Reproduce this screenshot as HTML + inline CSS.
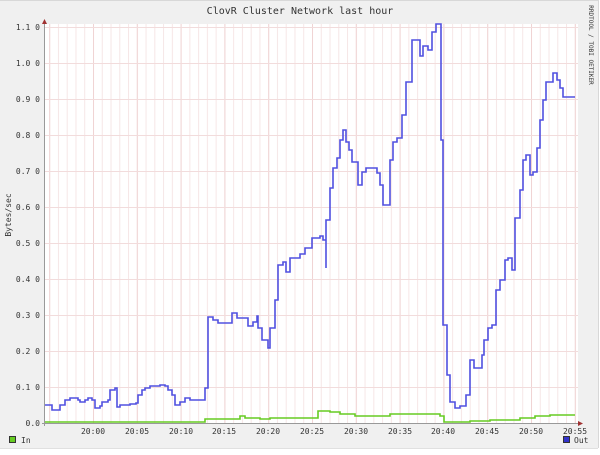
<!DOCTYPE html>
<html><head><meta charset="utf-8"><style>
html,body{margin:0;padding:0;background:#fff;width:600px;height:455px;overflow:hidden}
svg{display:block}
text{font-family:"DejaVu Sans Mono","Liberation Mono",monospace;fill:#333}
</style></head><body>
<svg width="600" height="455" viewBox="0 0 600 455" xmlns="http://www.w3.org/2000/svg">
<defs>
<pattern id="minor" x="49.2" y="0" width="8.76" height="455" patternUnits="userSpaceOnUse">
<line x1="0.5" y1="0" x2="0.5" y2="455" stroke="#f6e6e6" stroke-width="1"/>
</pattern>
<pattern id="major" x="49.2" y="0" width="43.8" height="455" patternUnits="userSpaceOnUse">
<line x1="0.5" y1="0" x2="0.5" y2="455" stroke="#f0d4d4" stroke-width="1"/>
</pattern>
</defs>
<rect x="0" y="0" width="598" height="448" fill="#f0f0f0"/>
<line x1="0" y1="448.5" x2="598" y2="448.5" stroke="#e0e0e0"/>
<line x1="598.5" y1="0" x2="598.5" y2="448" stroke="#d8d8d8"/>
<line x1="0" y1="0.5" x2="598" y2="0.5" stroke="#d8d8d8"/>
<rect x="45" y="24" width="533" height="399" fill="#fff"/>
<rect x="45" y="24" width="533" height="399" fill="url(#minor)"/>
<rect x="45" y="24" width="533" height="399" fill="url(#major)"/>
<g stroke="#f2dcdc">
<line x1="45" y1="27.5" x2="578" y2="27.5"/><line x1="45" y1="63.5" x2="578" y2="63.5"/>
<line x1="45" y1="99.5" x2="578" y2="99.5"/><line x1="45" y1="135.5" x2="578" y2="135.5"/>
<line x1="45" y1="171.5" x2="578" y2="171.5"/><line x1="45" y1="207.5" x2="578" y2="207.5"/>
<line x1="45" y1="243.5" x2="578" y2="243.5"/><line x1="45" y1="279.5" x2="578" y2="279.5"/>
<line x1="45" y1="315.5" x2="578" y2="315.5"/><line x1="45" y1="351.5" x2="578" y2="351.5"/>
<line x1="45" y1="387.5" x2="578" y2="387.5"/>
</g>
<path fill="none" stroke="#5050e0" stroke-width="1.6" d="M45,405 H52 V410 H60 V405 H65 V400 H70 V398 H78 V400 H80 V402 H85 V400 H88 V398 H92 V400 H95 V408 H100 V406 H102 V402 H108 V400 H110 V390 H115 V388 H117 V407 H120 V405 H130 V404 H136 V403 H138 V395 H142 V390 H145 V388 H150 V386 H160 V385 H165 V386 H168 V390 H172 V395 H175 V405 H180 V402 H185 V398 H190 V400 H205 V395 V388 H208 V317 H213 V320 H218 V323 H232 V313 H237 V318 H245 V318 H248 V326 H253 V322 H257 V316 H258 V328 H262 V340 H268 V348 H270 V328 H275 V300 H278 V265 H283 V262 H286 V272 H290 V258 H300 V254 H305 V248 H312 V238 H320 V236 H323 V240 H326 V268 V220 H330 V188 H333 V168 H337 V158 H340 V140 H343 V130 H346 V142 H349 V150 H352 V162 H358 V185 H362 V172 H366 V168 H377 V173 H380 V185 H383 V205 H390 V185 V160 H393 V142 H397 V138 H402 V115 H406 V82 H412 V40 H420 V56 H423 V46 H428 V50 H432 V32 H436 V24 H441 V140 H443 V325 H447 V375 H450 V402 H455 V408 H460 V406 H466 V395 H470 V360 H474 V368 H482 V355 H484 V340 H488 V328 H492 V325 H496 V290 H500 V280 H505 V260 H508 V258 H512 V270 H515 V218 H520 V190 H523 V160 H526 V155 H530 V175 H533 V172 H537 V148 H540 V120 H543 V100 H546 V82 H553 V73 H557 V80 H560 V88 H563 V97 H575"/>
<path fill="none" stroke="#66cc22" stroke-width="1.6" d="M45,422 H205 V419 H240 V416 H245 V418 H260 V419 H270 V418 H318 V411 H330 V412 H340 V414 H355 V416 H390 V414 H440 V416 H444 V422 H470 V421 H490 V420 H520 V418 H535 V416 H550 V415 H575"/>
<line x1="44.5" y1="22" x2="44.5" y2="426" stroke="#999"/>
<line x1="42" y1="423.5" x2="580" y2="423.5" stroke="#999"/>
<polygon points="42,24 47,24 44.5,19" fill="#a03030"/>
<polygon points="578,421 578,426 583,423.5" fill="#a03030"/>
<text x="300" y="14" font-size="10" text-anchor="middle" fill="#222">ClovR Cluster Network last hour</text>
<g font-size="8" text-anchor="end">
<text x="40" y="30">1.1 0</text><text x="40" y="66">1.0 0</text><text x="40" y="102">0.9 0</text>
<text x="40" y="138">0.8 0</text><text x="40" y="174">0.7 0</text><text x="40" y="210">0.6 0</text>
<text x="40" y="246">0.5 0</text><text x="40" y="282">0.4 0</text><text x="40" y="318">0.3 0</text>
<text x="40" y="354">0.2 0</text><text x="40" y="390">0.1 0</text><text x="40" y="426">0.0</text>
</g>
<g font-size="8" text-anchor="middle">
<text x="93" y="434">20:00</text><text x="137" y="434">20:05</text><text x="181" y="434">20:10</text>
<text x="224" y="434">20:15</text><text x="268" y="434">20:20</text><text x="312" y="434">20:25</text>
<text x="356" y="434">20:30</text><text x="400" y="434">20:35</text><text x="443" y="434">20:40</text>
<text x="487" y="434">20:45</text><text x="531" y="434">20:50</text><text x="575" y="434">20:55</text>
</g>
<text transform="translate(11,215) rotate(-90)" font-size="8" text-anchor="middle">Bytes/sec</text>
<text transform="translate(589,45) rotate(90)" font-size="6" text-anchor="middle" fill="#999">RRDTOOL / TOBI OETIKER</text>
<rect x="9.5" y="436.5" width="6" height="6" fill="#66cc22" stroke="#333"/>
<text x="21" y="443" font-size="8">In</text>
<rect x="563.5" y="436.5" width="6" height="6" fill="#3333cc" stroke="#333"/>
<text x="574" y="443" font-size="8">Out</text>
</svg>
</body></html>
